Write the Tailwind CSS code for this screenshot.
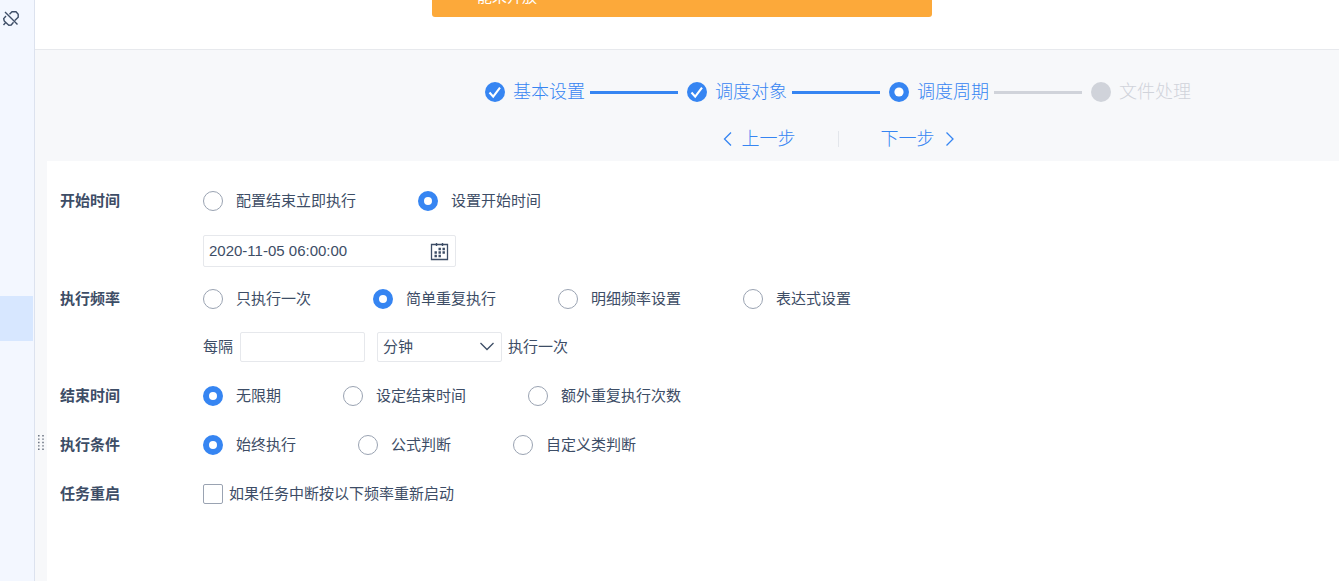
<!DOCTYPE html>
<html lang="zh-CN">
<head>
    <meta charset="UTF-8">
    <meta name="viewport" content="width=device-width, initial-scale=1.0">
    <title>调度周期</title>
    <script src="https://cdn.jsdelivr.net/npm/@tailwindcss/browser@4"></script>
</head>
<body class="flex min-h-screen overflow-x-hidden bg-white font-['Liberation_Sans','Noto_Sans_CJK_SC',sans-serif] text-[15px] leading-5 text-[#3d4d66]">

    <!-- Sidebar -->
    <aside class="w-[35px] shrink-0 border-r border-[#dce2ee] bg-[#f3f7ff]">
        <button type="button" aria-label="断开连接" class="block pt-[10px] pl-[2px]">
            <svg class="size-[18px]" viewBox="0 0 18 18" fill="none" stroke="#3d4d66" stroke-width="1.4">
                <path d="M3 2 15.5 14.5M4 6 1.7 8.6 2.2 11l4.6 4.2 2.4-.2 2.3-2.8M3.6 12.6 1.5 15M7.5 4.2 10 1.8h4l2.2 2.4v3L12.8 10.5"/>
            </svg>
        </button>
        <div class="mt-[268px] h-[45px] w-[33px] bg-[#d7e7ff]"></div>
    </aside>

    <main class="relative flex min-w-0 grow flex-col bg-[#f7f8fa]">
        <header class="flex h-[50px] shrink-0 justify-center border-b border-[#e7e9ed] bg-white pr-[10px]">
            <div role="alert" class="flex h-[17px] w-[500px] items-end overflow-hidden rounded-b-[3px] bg-[#fca93a] pb-[10px] pl-[45px] text-white">能未开放</div>
        </header>

        <!-- Step bar -->
        <div class="flex flex-col items-center pt-8 pb-3 pl-[302px] text-lg leading-5 font-light">
            <ol class="flex whitespace-nowrap text-[#3685f2]">
                <li class="flex items-center">
                    <svg class="mr-2 size-5" viewBox="0 0 20 20"><circle cx="10" cy="10" r="10" fill="#3685f2"/><path d="m4.5 10.5 3.7 4.2 6.8-9" fill="none" stroke="#fff" stroke-width="2.1"/></svg>
                    基本设置
                    <span class="mr-[9px] ml-[5px] h-[3px] w-[88px] bg-[#3685f2]"></span>
                </li>
                <li class="flex items-center">
                    <svg class="mr-2 size-5" viewBox="0 0 20 20"><circle cx="10" cy="10" r="10" fill="#3685f2"/><path d="m4.5 10.5 3.7 4.2 6.8-9" fill="none" stroke="#fff" stroke-width="2.1"/></svg>
                    调度对象
                    <span class="mr-[9px] ml-[5px] h-[3px] w-[88px] bg-[#3685f2]"></span>
                </li>
                <li class="flex items-center" aria-current="step">
                    <svg class="mr-2 size-5" viewBox="0 0 20 20"><circle cx="10" cy="10" r="10" fill="#3685f2"/><circle cx="10" cy="10" r="4.6" fill="#fff"/></svg>
                    调度周期
                    <span class="mr-[9px] ml-[5px] h-[3px] w-[88px] bg-[#d0d3da]"></span>
                </li>
                <li class="flex items-center text-[#d0d3da]">
                    <svg class="mr-2 size-5" viewBox="0 0 20 20"><circle cx="10" cy="10" r="10" fill="#d0d3da"/></svg>
                    文件处理
                </li>
            </ol>
            <div class="mt-[27px] flex items-center text-[#3685f2]">
                <button type="button" class="flex items-center gap-[10px]">
                    <svg class="h-4 w-[10px]" viewBox="0 0 10 16" fill="none" stroke="currentColor" stroke-width="1.3"><path d="M9 1.5 2.5 8 9 14.5"/></svg>
                    上一步
                </button>
                <span class="mx-[42px] h-4 w-px bg-[#e3e6eb]"></span>
                <button type="button" class="flex items-center gap-[10px]">
                    下一步
                    <svg class="h-4 w-[10px]" viewBox="0 0 10 16" fill="none" stroke="currentColor" stroke-width="1.3"><path d="M1.5 1.5 8 8l-6.5 6.5"/></svg>
                </button>
            </div>
        </div>

        <!-- Drag handle on the left edge -->
        <svg class="absolute top-[434px] left-[3px] h-[17px] w-[6px]" viewBox="0 0 6 17" fill="none" stroke="#68707f" stroke-width="1.5">
            <path d="M.8 1v16M5 1v16" stroke-dasharray="1.4 2"/>
        </svg>

        <form class="ml-3 flex grow flex-col bg-white pt-[30px] pl-[13px]">
            <fieldset class="flex">
                <legend class="float-left w-[143px] font-bold">开始时间</legend>
                <div>
                    <div class="flex gap-[62px]">
                        <label class="flex items-center gap-[13px]"><input type="radio" name="start" class="size-5 appearance-none rounded-full border border-[#9aa3b2] checked:border-6 checked:border-[#3685f2]">配置结束立即执行</label>
                        <label class="flex items-center gap-[13px]"><input type="radio" name="start" checked class="size-5 appearance-none rounded-full border border-[#9aa3b2] checked:border-6 checked:border-[#3685f2]">设置开始时间</label>
                    </div>
                    <div class="mt-6 flex h-8 w-[253px] items-center rounded-[2px] border border-[#e6e8ec] pr-[6px]">
                        <input type="text" aria-label="开始时间" value="2020-11-05 06:00:00" class="h-full min-w-0 grow pb-[2px] pl-[5px] outline-none">
                        <button type="button" aria-label="选择日期">
                            <svg class="size-[19px]" viewBox="0 0 19 19" fill="none" stroke="#3d4d66">
                                <path d="M1.5 2.5h16v15h-16z" stroke-width="1.3"/>
                                <path d="M6.5 1v3M12.5 1v3" stroke-width="1.4"/>
                                <path d="M8.5 7h2.4m1.6 0h2.4M4.5 10.5h2.4m1.6 0h2.4m1.6 0h2.4M4.5 14h2.4m1.6 0h2.4" stroke-width="2.4"/>
                            </svg>
                        </button>
                    </div>
                </div>
            </fieldset>

            <fieldset class="mt-[22px] flex">
                <legend class="float-left w-[143px] font-bold">执行频率</legend>
                <div>
                    <div class="flex gap-[62px]">
                        <label class="flex items-center gap-[13px]"><input type="radio" name="freq" class="size-5 appearance-none rounded-full border border-[#9aa3b2] checked:border-6 checked:border-[#3685f2]">只执行一次</label>
                        <label class="flex items-center gap-[13px]"><input type="radio" name="freq" checked class="size-5 appearance-none rounded-full border border-[#9aa3b2] checked:border-6 checked:border-[#3685f2]">简单重复执行</label>
                        <label class="flex items-center gap-[13px]"><input type="radio" name="freq" class="size-5 appearance-none rounded-full border border-[#9aa3b2] checked:border-6 checked:border-[#3685f2]">明细频率设置</label>
                        <label class="flex items-center gap-[13px]"><input type="radio" name="freq" class="size-5 appearance-none rounded-full border border-[#9aa3b2] checked:border-6 checked:border-[#3685f2]">表达式设置</label>
                    </div>
                    <div class="mt-[23px] flex items-center">
                        <label for="interval" class="mr-[7px]">每隔</label>
                        <input id="interval" type="text" class="mr-3 h-[30px] w-[125px] rounded-[2px] border border-[#e6e8ec] px-[6px] outline-none">
                        <div class="relative mr-[6px]">
                            <select aria-label="时间单位" class="block h-[30px] w-[125px] appearance-none rounded-[2px] border border-[#e6e8ec] bg-white pl-[5px] outline-none">
                                <option>分钟</option>
                                <option>小时</option>
                                <option>天</option>
                            </select>
                            <svg class="pointer-events-none absolute top-[10px] right-[7px] h-[9px] w-4" viewBox="0 0 16 9" fill="none" stroke="#3d4d66" stroke-width="1.3"><path d="m1.5 1 6.5 6.5L14.5 1"/></svg>
                        </div>
                        <span>执行一次</span>
                    </div>
                </div>
            </fieldset>

            <fieldset class="mt-6 flex">
                <legend class="float-left w-[143px] font-bold">结束时间</legend>
                <div class="flex gap-[62px]">
                    <label class="flex items-center gap-[13px]"><input type="radio" name="end" checked class="size-5 appearance-none rounded-full border border-[#9aa3b2] checked:border-6 checked:border-[#3685f2]">无限期</label>
                    <label class="flex items-center gap-[13px]"><input type="radio" name="end" class="size-5 appearance-none rounded-full border border-[#9aa3b2] checked:border-6 checked:border-[#3685f2]">设定结束时间</label>
                    <label class="flex items-center gap-[13px]"><input type="radio" name="end" class="size-5 appearance-none rounded-full border border-[#9aa3b2] checked:border-6 checked:border-[#3685f2]">额外重复执行次数</label>
                </div>
            </fieldset>

            <fieldset class="mt-[29px] flex">
                <legend class="float-left w-[143px] font-bold">执行条件</legend>
                <div class="flex gap-[62px]">
                    <label class="flex items-center gap-[13px]"><input type="radio" name="cond" checked class="size-5 appearance-none rounded-full border border-[#9aa3b2] checked:border-6 checked:border-[#3685f2]">始终执行</label>
                    <label class="flex items-center gap-[13px]"><input type="radio" name="cond" class="size-5 appearance-none rounded-full border border-[#9aa3b2] checked:border-6 checked:border-[#3685f2]">公式判断</label>
                    <label class="flex items-center gap-[13px]"><input type="radio" name="cond" class="size-5 appearance-none rounded-full border border-[#9aa3b2] checked:border-6 checked:border-[#3685f2]">自定义类判断</label>
                </div>
            </fieldset>

            <fieldset class="mt-[29px] flex">
                <legend class="float-left w-[143px] font-bold">任务重启</legend>
                <label class="flex items-center gap-[6px]"><input type="checkbox" class="size-5 appearance-none rounded-[2px] border border-[#9aa3b2] checked:border-6 checked:border-[#3685f2]">如果任务中断按以下频率重新启动</label>
            </fieldset>
        </form>
    </main>
</body>
</html>
